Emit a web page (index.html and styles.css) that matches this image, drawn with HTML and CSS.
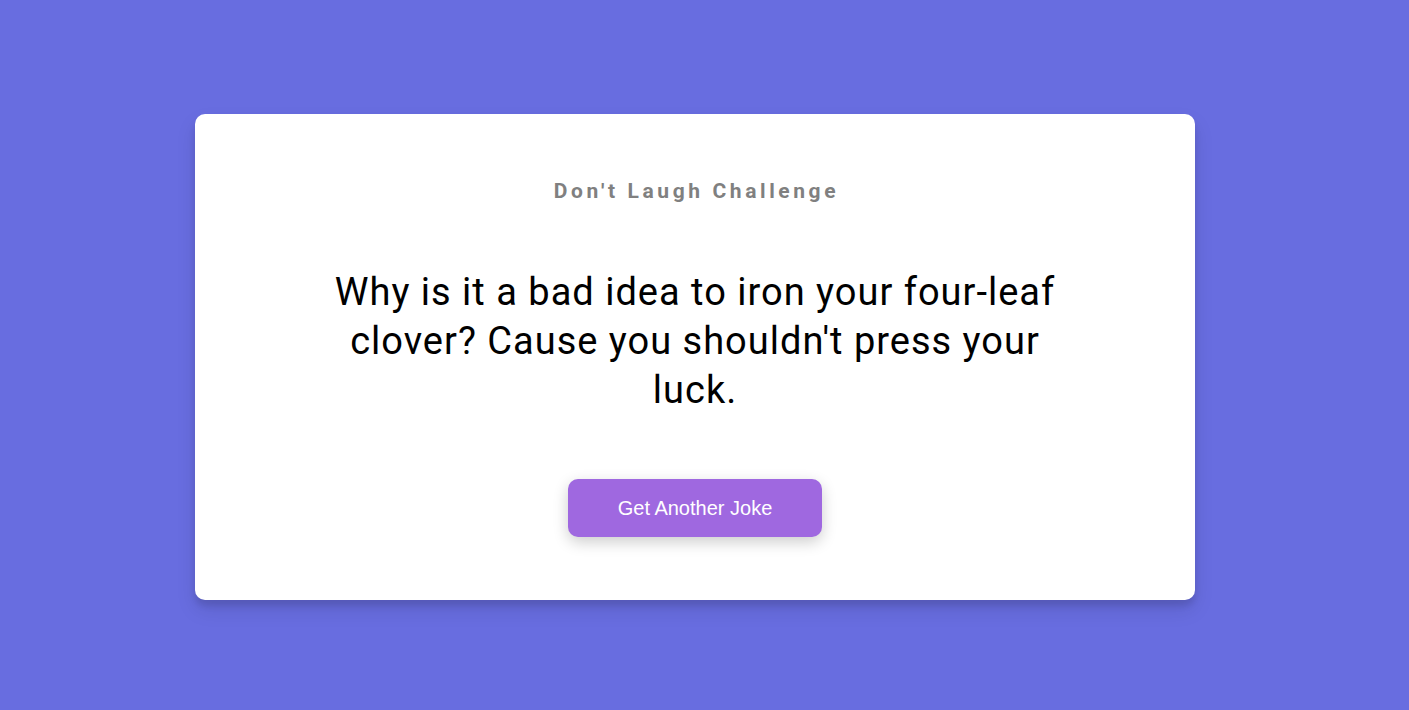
FILE: index.html
```html
<!DOCTYPE html>
<html lang="en">
<head>
<meta charset="UTF-8">
<title>Don't Laugh Challenge</title>
<link rel="stylesheet" href="styles.css">
</head>
<body>
<main class="page">
  <section class="card">
    <h3 class="title">Don't Laugh Challenge</h3>
    <p class="joke">Why is it a bad idea to iron your four-leaf clover? Cause you shouldn't press your luck.</p>
    <button class="btn">Get Another Joke</button>
  </section>
</main>
</body>
</html>
```
FILE: styles.css
```css
* { box-sizing: border-box; }
html, body { margin: 0; padding: 0; }
body {
  background: #686de0;
  font-family: Roboto, "Liberation Sans", sans-serif;
  height: 710px;
  overflow: hidden;
}
.page {
  height: 710px;
  display: flex;
  align-items: center;
  justify-content: center;
  padding: 4px 19px 0 0;
}
.card {
  width: 1000px;
  background: #fff;
  border-radius: 10px;
  box-shadow: 0 10px 20px rgba(0,0,0,0.1), 0 6px 6px rgba(0,0,0,0.1);
  padding: 61px 100px 63px;
  text-align: center;
  display: flex;
  flex-direction: column;
  align-items: center;
}
.title {
  margin: 0;
  font-size: 21px;
  font-weight: 700;
  letter-spacing: 3.6px;
  color: #808080;
  line-height: 32px;
  padding-left: 3px;
}
.joke {
  margin: 61px 0 0;
  max-width: 760px;
  font-size: 38px;
  line-height: 49px;
  color: #000;
  letter-spacing: 1px;
}
.btn {
  margin-top: 64px;
  background: #9f68e0;
  color: #fff;
  border: none;
  border-radius: 10px;
  font-family: "Liberation Sans", Arial, sans-serif;
  font-size: 20px;
  width: 254px;
  height: 58px;
  box-shadow: 0 5px 15px rgba(0,0,0,0.2);
  cursor: pointer;
}
```
